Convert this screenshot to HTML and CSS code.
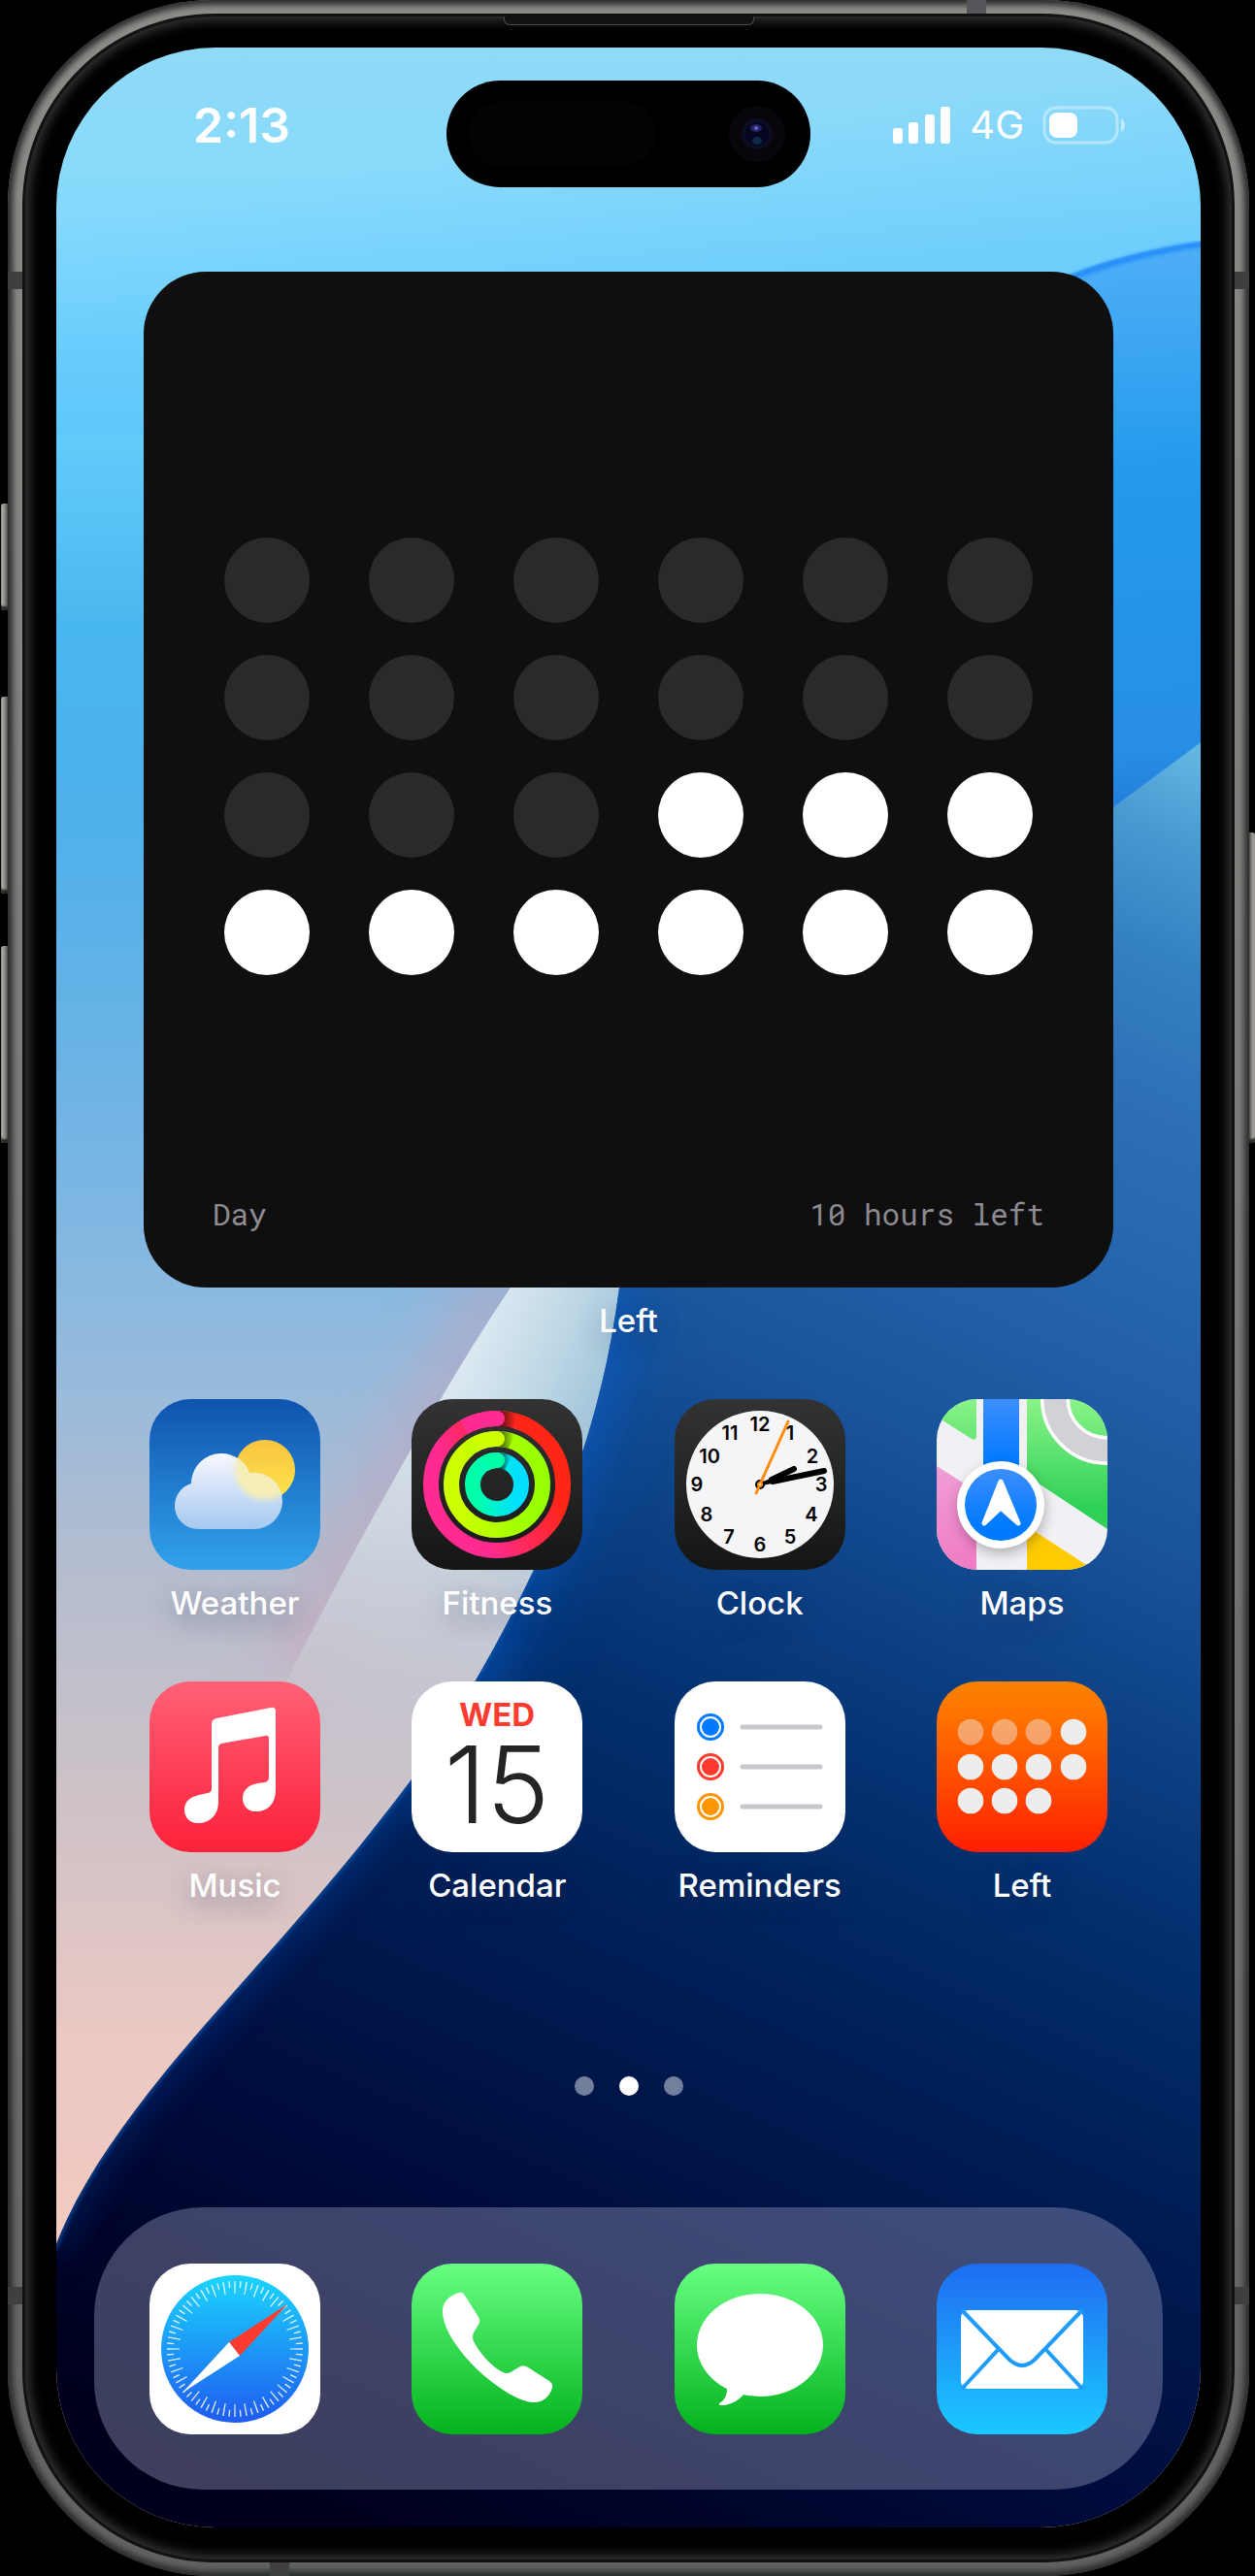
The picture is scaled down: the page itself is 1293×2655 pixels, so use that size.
FILE: index.html
```html
<!DOCTYPE html>
<html lang="en">
<head>
<meta charset="utf-8">
<meta name="viewport" content="width=device-width, initial-scale=1">
<title>Home Screen</title>
<link rel="stylesheet" href="styles.css">
</head>
<body>
<div class="stage">
<div class="phone">
  <span class="key key-action"></span>
  <span class="key key-up"></span>
  <span class="key key-down"></span>
  <span class="key key-side"></span>
  <span class="band band-left band-upper"></span>
  <span class="band band-left band-lower"></span>
  <span class="band band-right band-upper"></span>
  <span class="band band-right band-lower"></span>
  <span class="band band-top"></span>
  <span class="band band-bottom"></span>
  <div class="bezel">
    <span class="speaker"></span>
    <main class="screen">
      <svg class="wallpaper" viewBox="58 49 1179 2556" preserveAspectRatio="none" aria-hidden="true">
        <defs>
          <linearGradient id="sky" gradientUnits="userSpaceOnUse" x1="0" y1="49" x2="0" y2="2349">
            <stop offset="0" stop-color="#90daf9"/>
            <stop offset=".06" stop-color="#88dafb"/>
            <stop offset=".11" stop-color="#7dd7fe"/>
            <stop offset=".174" stop-color="#62ccfa"/>
            <stop offset=".26" stop-color="#49b7ef"/>
            <stop offset=".33" stop-color="#4bb0eb"/>
            <stop offset=".41" stop-color="#5fb2e7"/>
            <stop offset=".5" stop-color="#78b5e4"/>
            <stop offset=".56" stop-color="#8bb9df"/>
            <stop offset=".61" stop-color="#9cbbda"/>
            <stop offset=".674" stop-color="#b2bccf"/>
            <stop offset=".74" stop-color="#c3c0ca"/>
            <stop offset=".805" stop-color="#d3c3c6"/>
            <stop offset=".89" stop-color="#eac8c3"/>
            <stop offset="1" stop-color="#f4cbc0"/>
          </linearGradient>
          <linearGradient id="skyDeep" gradientUnits="userSpaceOnUse" x1="560" y1="150" x2="584" y2="330">
            <stop offset="0" stop-color="#5cc4fa" stop-opacity="0"/>
            <stop offset="1" stop-color="#5cc4fa" stop-opacity=".7"/>
          </linearGradient>
          <linearGradient id="petal" gradientUnits="userSpaceOnUse" x1="1180" y1="260" x2="1200" y2="830">
            <stop offset="0" stop-color="#4eaef7"/>
            <stop offset=".4" stop-color="#239aec"/>
            <stop offset=".9" stop-color="#278ee3"/>
            <stop offset="1" stop-color="#237fdc"/>
          </linearGradient>
          <linearGradient id="sea" gradientUnits="userSpaceOnUse" x1="1237" y1="780" x2="404" y2="2628">
            <stop offset="0" stop-color="#62b6e2"/>
            <stop offset=".04" stop-color="#4a9bd2"/>
            <stop offset=".1" stop-color="#3481c1"/>
            <stop offset=".17" stop-color="#2d70b8"/>
            <stop offset=".28" stop-color="#2362ab"/>
            <stop offset=".37" stop-color="#1a549b"/>
            <stop offset=".46" stop-color="#0d4286"/>
            <stop offset=".55" stop-color="#03306f"/>
            <stop offset=".64" stop-color="#00235c"/>
            <stop offset=".73" stop-color="#00174b"/>
            <stop offset=".82" stop-color="#000c3d"/>
            <stop offset=".92" stop-color="#000429"/>
            <stop offset="1" stop-color="#00001c"/>
          </linearGradient>
          <linearGradient id="ribbon" gradientUnits="userSpaceOnUse" x1="490" y1="1380" x2="630" y2="1440">
            <stop offset="0" stop-color="#dbe8f1"/>
            <stop offset=".5" stop-color="#bfd8e6"/>
            <stop offset="1" stop-color="#9fc3d8"/>
          </linearGradient>
          <linearGradient id="ribbonLow" gradientUnits="userSpaceOnUse" x1="520" y1="1440" x2="430" y2="1800">
            <stop offset="0" stop-color="#c8cfda" stop-opacity="0"/>
            <stop offset=".6" stop-color="#c8cdd7"/>
            <stop offset="1" stop-color="#cac5cf"/>
          </linearGradient>
          <linearGradient id="ribbonFade" gradientUnits="userSpaceOnUse" x1="0" y1="1640" x2="0" y2="1920">
            <stop offset="0" stop-color="#fff"/>
            <stop offset="1" stop-color="#000"/>
          </linearGradient>
          <mask id="fade" maskUnits="userSpaceOnUse" x="0" y="1200" width="800" height="1200">
            <rect x="0" y="1200" width="800" height="1200" fill="url(#ribbonFade)"/>
          </mask>
          <linearGradient id="rim" gradientUnits="userSpaceOnUse" x1="640" y1="1300" x2="58" y2="2313">
            <stop offset="0" stop-color="#0b63c8"/>
            <stop offset=".5" stop-color="#0346a4"/>
            <stop offset="1" stop-color="#00286e"/>
          </linearGradient>
          <filter id="soft" x="-50%" y="-50%" width="200%" height="200%"><feGaussianBlur stdDeviation="30"/></filter>
          <filter id="softer" x="-50%" y="-50%" width="200%" height="200%"><feGaussianBlur stdDeviation="16"/></filter>
          <filter id="hair" x="-5%" y="-5%" width="110%" height="110%"><feGaussianBlur stdDeviation="2"/></filter>
          <clipPath id="seaClip"><path d="M690 1000 Q655 1180 638 1327 C625 1430 595 1530 550 1618 C512 1698 470 1770 424 1834 C330 1960 240 2050 169 2137 C120 2198 80 2255 56 2318 V2610 H1240 V763 L1147 832 Q900 930 690 1000Z"/></clipPath>
        </defs>
        <rect x="58" y="49" width="1179" height="2556" fill="url(#sky)"/>
        <rect x="58" y="49" width="1179" height="400" fill="url(#skyDeep)" opacity=".7"/>
        <path d="M530 1300 L300 1730" stroke="#c9a0b8" stroke-width="60" opacity=".5" filter="url(#soft)"/>
        <g mask="url(#fade)">
          <path d="M560 1270 L526 1327 C490 1380 455 1440 424 1493 C383 1565 340 1645 297 1730 Q230 1870 200 2000 L400 2000 L700 1270Z" fill="url(#ribbon)"/>
          <path d="M560 1270 L526 1327 C490 1380 455 1440 424 1493 C383 1565 340 1645 297 1730 Q230 1870 200 2000 L400 2000 L700 1270Z" fill="url(#ribbonLow)"/>
        </g>
        <path d="M1000 340 Q1100 265 1240 249 V765 L1140 838 L1000 880Z" fill="url(#petal)"/>
        <path d="M1060 307 Q1130 268 1240 251" fill="none" stroke="#1e86fa" stroke-width="5" filter="url(#hair)"/>
        <g clip-path="url(#seaClip)">
          <rect x="50" y="700" width="1200" height="1910" fill="url(#sea)"/>
          <path d="M638 1327 C625 1430 595 1530 550 1618 C512 1698 470 1770 424 1834" fill="none" stroke="#0b5fc4" stroke-width="70" opacity=".35" filter="url(#soft)"/>
          <path d="M638 1327 C625 1430 595 1530 550 1618 C512 1698 470 1770 424 1834 C330 1960 240 2050 169 2137 C120 2198 80 2255 56 2318" fill="none" stroke="url(#rim)" stroke-width="24" opacity=".6" filter="url(#softer)"/>
          <path d="M638 1327 C625 1430 595 1530 550 1618 C512 1698 470 1770 424 1834 C330 1960 240 2050 169 2137 C120 2198 80 2255 56 2318" fill="none" stroke="#0d58b0" stroke-width="5" opacity=".7" filter="url(#hair)"/>
        </g>
      </svg>

      <header class="status">
        <time class="status-time">2:13</time>
        <div class="island">
          <span class="sensor"></span>
          <svg class="camera" viewBox="0 0 60 60" aria-hidden="true">
            <circle cx="30" cy="30" r="29" fill="#08060b"/>
            <circle cx="30" cy="30" r="16" fill="#0b0d22"/>
            <circle cx="30" cy="30" r="12" fill="#05061f"/>
            <ellipse cx="29" cy="24" rx="6" ry="4" fill="#2b2870" opacity=".8"/>
            <ellipse cx="30" cy="37" rx="5" ry="4" fill="#0d3350" opacity=".8"/>
            <circle cx="29" cy="24" r="2" fill="#6a62c8"/>
          </svg>
        </div>
        <div class="status-right">
          <svg class="signal" viewBox="0 0 60 38" aria-label="Signal" role="img">
            <g fill="#fff">
              <rect x="0" y="22" width="10" height="16" rx="3"/>
              <rect x="16" y="16" width="10" height="22" rx="3"/>
              <rect x="33" y="8" width="10" height="30" rx="3"/>
              <rect x="49" y="0" width="10" height="38" rx="3"/>
            </g>
          </svg>
          <span class="network">4G</span>
          <svg class="battery" viewBox="0 0 86 40" aria-label="Battery" role="img">
            <rect x="2" y="2" width="75" height="36" rx="12" fill="none" stroke="#fff" stroke-opacity=".4" stroke-width="3"/>
            <rect x="7" y="7" width="29" height="26" rx="8" fill="#fff"/>
            <path d="M81 13 Q85 15 85 20 Q85 25 81 27Z" fill="#fff" fill-opacity=".5"/>
          </svg>
        </div>
      </header>

      <section class="widget-slot">
        <div class="widget">
          <div class="hours">
            <i></i><i></i><i></i><i></i><i></i><i></i>
            <i></i><i></i><i></i><i></i><i></i><i></i>
            <i></i><i></i><i></i><i class="on"></i><i class="on"></i><i class="on"></i>
            <i class="on"></i><i class="on"></i><i class="on"></i><i class="on"></i><i class="on"></i><i class="on"></i>
          </div>
          <div class="widget-foot"><span>Day</span><span>10 hours left</span></div>
        </div>
        <span class="label">Left</span>
      </section>

      <nav class="apps" aria-label="Apps">
        <a class="app" href="#weather">
          <svg class="icon icon-weather" viewBox="0 0 176 176" aria-hidden="true">
            <defs>
              <linearGradient id="wSun" x1="0" y1="0" x2="0" y2="1"><stop offset="0" stop-color="#f8c43f"/><stop offset="1" stop-color="#fde54e"/></linearGradient>
              <linearGradient id="wCloud" gradientUnits="userSpaceOnUse" x1="0" y1="56" x2="0" y2="134"><stop offset="0" stop-color="#f8f8fe"/><stop offset="1" stop-color="#a4c9ef"/></linearGradient>
              <radialGradient id="wGlow" gradientUnits="userSpaceOnUse" cx="119" cy="73" r="35"><stop offset="0" stop-color="#f6eeb4"/><stop offset=".75" stop-color="#f6eeb4" stop-opacity=".95"/><stop offset="1" stop-color="#f6eeb4" stop-opacity="0"/></radialGradient>
              <clipPath id="wClip"><circle cx="50" cy="110" r="24"/><circle cx="74" cy="87" r="31"/><circle cx="108" cy="105" r="29"/><rect x="50" y="84" width="58" height="50"/></clipPath>
            </defs>
            <circle cx="119" cy="73" r="31" fill="url(#wSun)"/>
            <g clip-path="url(#wClip)">
              <rect x="20" y="50" width="125" height="90" fill="url(#wCloud)"/>
              <circle cx="119" cy="73" r="35" fill="url(#wGlow)"/>
            </g>
          </svg>
          <span class="label">Weather</span>
        </a>
        <a class="app" href="#fitness">
          <svg class="icon icon-dark" viewBox="0 0 176 176" aria-hidden="true">
            <defs>
              <linearGradient id="f1" gradientUnits="userSpaceOnUse" x1="60" y1="120" x2="140" y2="80"><stop offset="0" stop-color="#ff2b90"/><stop offset="1" stop-color="#ff2617"/></linearGradient>
              <linearGradient id="f2" gradientUnits="userSpaceOnUse" x1="50" y1="88" x2="130" y2="88"><stop offset="0" stop-color="#ccff00"/><stop offset="1" stop-color="#96ff00"/></linearGradient>
              <linearGradient id="f3" gradientUnits="userSpaceOnUse" x1="68" y1="88" x2="108" y2="88"><stop offset="0" stop-color="#00ffa9"/><stop offset="1" stop-color="#00dfff"/></linearGradient>
              <linearGradient id="fs" x1="0" y1="0" x2="1" y2="0"><stop offset="0" stop-color="#000" stop-opacity=".7"/><stop offset="1" stop-color="#000" stop-opacity="0"/></linearGradient>
            </defs>
            <g fill="none" stroke-width="16">
              <circle cx="88" cy="88" r="68" stroke="url(#f1)"/>
              <circle cx="88" cy="88" r="47" stroke="url(#f2)"/>
              <circle cx="88" cy="88" r="25" stroke="url(#f3)"/>
            </g>
            <path d="M90 12 Q100 13 108 15 L104 31 Q98 29 90 28Z" fill="url(#fs)"/>
            <path d="M90 33 Q100 34 106 37 L100 51 Q96 49 90 49Z" fill="url(#fs)"/>
            <path d="M90 55 Q98 56 103 59 L96 73 Q94 72 90 71Z" fill="url(#fs)"/>
            <path d="M88 12 A8 8 0 0 1 88 28 A60 60 0 0 0 58 36 L50 22 A76 76 0 0 1 88 12Z" fill="#ff2b90"/>
            <path d="M88 33 A8 8 0 0 1 88 49 A39 39 0 0 0 68 54 L60 41 A55 55 0 0 1 88 33Z" fill="#ccff00"/>
            <path d="M88 55 A8 8 0 0 1 88 71 A17 17 0 0 0 79 74 L71 60 A33 33 0 0 1 88 55Z" fill="#00ffa9"/>
          </svg>
          <span class="label">Fitness</span>
        </a>
        <a class="app" href="#clock">
          <svg class="icon icon-dark" viewBox="0 0 176 176" aria-hidden="true">
            <circle cx="88" cy="88" r="76" fill="#f5f5f8"/>
            <g class="numerals">
              <text x="88" y="33">12</text><text x="119" y="42">1</text><text x="142" y="66">2</text>
              <text x="151" y="95">3</text><text x="141" y="126">4</text><text x="119" y="149">5</text>
              <text x="88" y="157">6</text><text x="56" y="149">7</text><text x="33" y="126">8</text>
              <text x="23" y="95">9</text><text x="36" y="66">10</text><text x="57" y="42">11</text>
            </g>
            <g stroke="#000" stroke-linecap="round">
              <path d="M88 88 L100 83" stroke-width="3"/>
              <path d="M100 83 L123 72" stroke-width="6"/>
              <path d="M88 88 L102 85" stroke-width="3"/>
              <path d="M101 85 L154 74" stroke-width="6"/>
            </g>
            <circle cx="88" cy="88" r="5" fill="#000"/>
            <path d="M84 97 L117 23" stroke="#ff8c0c" stroke-width="3" stroke-linecap="round"/>
            <circle cx="88" cy="88" r="2" fill="#fff" stroke="#ff8c0c" stroke-width="2"/>
          </svg>
          <span class="label">Clock</span>
        </a>
        <a class="app" href="#maps">
          <svg class="icon icon-maps" viewBox="0 0 176 176" aria-hidden="true">
            <defs>
              <linearGradient id="mGreen" gradientUnits="userSpaceOnUse" x1="0" y1="0" x2="0" y2="110"><stop offset="0" stop-color="#8af388"/><stop offset="1" stop-color="#30d158"/></linearGradient>
              <linearGradient id="mBlue" gradientUnits="userSpaceOnUse" x1="0" y1="0" x2="0" y2="66"><stop offset="0" stop-color="#3d8efb"/><stop offset="1" stop-color="#007aff"/></linearGradient>
              <linearGradient id="mPin" x1="0" y1="0" x2="0" y2="1"><stop offset="0" stop-color="#3d8efb"/><stop offset=".8" stop-color="#007aff"/></linearGradient>
              <linearGradient id="mPink" x1="0" y1="0" x2="0" y2="1"><stop offset="0" stop-color="#f09ed6"/><stop offset="1" stop-color="#f07bc4"/></linearGradient>
              <filter id="mShadow" x="-30%" y="-30%" width="160%" height="160%"><feGaussianBlur stdDeviation="7"/></filter>
            </defs>
            <path d="M0 0 H41 V38 Q41 43 36 41 L0 18Z" fill="url(#mGreen)"/>
            <rect x="48" y="0" width="37" height="100" fill="url(#mBlue)"/>
            <path d="M93 0 H176 V134 L93 79Z" fill="url(#mGreen)"/>
            <path d="M0 69 L41 95 V176 H0Z" fill="url(#mPink)"/>
            <path d="M93 131 L162 176 H93Z" fill="#fecb02"/>
            <circle cx="175" cy="0" r="53" fill="none" stroke="#fff" stroke-width="30"/>
            <circle cx="175" cy="0" r="53" fill="none" stroke="#d1d1d6" stroke-width="23"/>
            <circle cx="67" cy="114" r="44" fill="#000" opacity=".3" filter="url(#mShadow)"/>
            <circle cx="66" cy="109" r="45" fill="#fff"/>
            <circle cx="66" cy="109" r="37" fill="url(#mPin)"/>
            <path d="M66 85 L84 128 L66 112 L49 128Z" fill="#fff" stroke="#fff" stroke-width="5" stroke-linejoin="round"/>
          </svg>
          <span class="label">Maps</span>
        </a>
        <a class="app" href="#music">
          <svg class="icon icon-music" viewBox="0 0 176 176" aria-hidden="true">
            <path d="M69 38 L125 27 Q130 26 130 31 V112 C130 126 122 134 110 134 C101 134 96 128 96 120 C96 112 102 107 111 105 L119 104 Q123 103 123 99 V59 Q123 55 119 56 L74 64 Q71 65 71 68 V124 C71 138 62 146 50 146 C41 146 36 140 36 132 C36 124 42 119 51 117 L60 115 Q64 114 64 111 V44 Q64 39 69 38Z" fill="#fff"/>
          </svg>
          <span class="label">Music</span>
        </a>
        <a class="app" href="#calendar">
          <svg class="icon icon-white" viewBox="0 0 176 176" aria-hidden="true">
            <text class="weekday" x="88" y="46">WED</text>
            <text class="day" x="88" y="146">15</text>
          </svg>
          <span class="label">Calendar</span>
        </a>
        <a class="app" href="#reminders">
          <svg class="icon icon-white" viewBox="0 0 176 176" aria-hidden="true">
            <g fill="none" stroke-width="3">
              <circle cx="37" cy="47" r="12.5" stroke="#007aff"/>
              <circle cx="37" cy="88" r="12.5" stroke="#ff3b30"/>
              <circle cx="37" cy="129" r="12.5" stroke="#ff9500"/>
            </g>
            <circle cx="37" cy="47" r="9" fill="#007aff"/>
            <circle cx="37" cy="88" r="9" fill="#ff3b30"/>
            <circle cx="37" cy="129" r="9" fill="#ff9500"/>
            <path d="M70 47 H150 M70 88 H150 M70 129 H150" stroke="#c7c7cc" stroke-width="5" stroke-linecap="round"/>
          </svg>
          <span class="label">Reminders</span>
        </a>
        <a class="app" href="#left">
          <svg class="icon icon-left" viewBox="0 0 176 176" aria-hidden="true">
            <g fill="#ededed">
              <g fill-opacity=".45"><circle cx="35" cy="52" r="13.3"/><circle cx="70" cy="52" r="13.3"/><circle cx="105" cy="52" r="13.3"/></g>
              <circle cx="141" cy="52" r="13.3"/>
              <circle cx="35" cy="88" r="13.3"/><circle cx="70" cy="88" r="13.3"/><circle cx="105" cy="88" r="13.3"/><circle cx="141" cy="88" r="13.3"/>
              <circle cx="35" cy="123" r="13.3"/><circle cx="70" cy="123" r="13.3"/><circle cx="105" cy="123" r="13.3"/>
            </g>
          </svg>
          <span class="label">Left</span>
        </a>
      </nav>

      <div class="pages">
        <button type="button" aria-label="Page 1"></button>
        <button type="button" class="current" aria-label="Page 2"></button>
        <button type="button" aria-label="Page 3"></button>
      </div>

      <nav class="dock" aria-label="Dock">
        <a class="app" href="#safari" aria-label="Safari">
          <svg class="icon icon-white" viewBox="0 0 176 176" aria-hidden="true">
            <defs><linearGradient id="sBlue" x1="0" y1="0" x2="0" y2="1"><stop offset="0" stop-color="#1bd5fd"/><stop offset="1" stop-color="#1f5bf0"/></linearGradient></defs>
            <circle cx="88" cy="88" r="76" fill="url(#sBlue)"/>
            <g fill="none" stroke="#fff" stroke-opacity=".85">
              <circle cx="88" cy="88" r="63.5" stroke-width="13" pathLength="360" stroke-dasharray="1.2 8.8" stroke-dashoffset=".6"/>
              <circle cx="88" cy="88" r="66.5" stroke-width="7" pathLength="360" stroke-dasharray="1.2 8.8" stroke-dashoffset="-4.4"/>
            </g>
            <path d="M142 42 L82 81 L93 95Z" fill="#ff3b30"/>
            <path d="M34 133 L82 81 L93 95Z" fill="#fff"/>
          </svg>
        </a>
        <a class="app" href="#phone" aria-label="Phone">
          <svg class="icon icon-green" viewBox="0 0 176 176" aria-hidden="true">
            <path d="M52 30 Q54 31 55 33 L69 55 Q71 59 69 63 L64 71 Q62 76 64 80 C70 92 82 106 94 112 Q98 114 102 112 L112 106 Q116 104 120 107 L142 121 Q146 124 145 128 C142 138 134 144 125 143 C95 141 33 85 32 50 C31 40 40 32 49 30 Q51 29 52 30Z" fill="#fff"/>
          </svg>
        </a>
        <a class="app" href="#messages" aria-label="Messages">
          <svg class="icon icon-green" viewBox="0 0 176 176" aria-hidden="true">
            <ellipse cx="88" cy="84" rx="65" ry="53" fill="#fff"/>
            <path d="M53 122 C56 134 52 141 46 144 Q45 146 48 146 C58 146 67 140 72 134 L80 120Z" fill="#fff"/>
          </svg>
        </a>
        <a class="app" href="#mail" aria-label="Mail">
          <svg class="icon icon-mail" viewBox="0 0 176 176" aria-hidden="true">
            <rect x="25" y="48" width="126" height="81" rx="8" fill="#fff"/>
            <g fill="none" stroke="#1f9cf9" stroke-width="4">
              <path d="M26 48 L75 99 Q88 111 101 99 L150 48"/>
              <path d="M26 129 L64 88 M150 129 L112 88"/>
            </g>
          </svg>
        </a>
      </nav>
    </main>
  </div>
</div>
</div>
</body>
</html>
```
FILE: styles.css
```css
* { box-sizing: border-box; }

body {
  margin: 0;
  background: #000;
  font-family: Inter, "Liberation Sans", sans-serif;
  color: #fff;
}

.stage { padding: 0 6px 0 8px; }

/* Device body */
.phone {
  position: relative;
  padding: 15px 16px;
  border-radius: 212px;
  background: linear-gradient(#8d8c89, #7d7d7b 40%, #616263);
  box-shadow: inset 0 0 6px 5px #292b2c;
}

.key {
  position: absolute;
  left: -7px;
  width: 7px;
  border-radius: 3px 0 0 3px;
  background: linear-gradient(90deg, #c4c1bb, #5a5957);
  box-shadow: inset 0 -4px 2px #2b2b2b;
}
.key-action { top: 519px; height: 110px; }
.key-up { top: 718px; height: 203px; }
.key-down { top: 975px; height: 203px; }
.key-side {
  left: auto;
  right: -6px;
  top: 858px;
  width: 6px;
  height: 320px;
  border-radius: 0 3px 3px 0;
  background: linear-gradient(270deg, #c4c1bb, #5a5957);
}

.band { position: absolute; background: #3e3f40; }
.band-left { left: 0; }
.band-right { right: 0; }
.band-left, .band-right { width: 16px; height: 18px; }
.band-upper { top: 280px; }
.band-lower { bottom: 280px; }
.band-top, .band-bottom { width: 20px; height: 15px; }
.band-top { top: 0; right: 271px; background: #55565a; }
.band-bottom { bottom: 0; left: 270px; }

.bezel {
  position: relative;
  padding: 34px 34px 35px;
  border-radius: 197px;
  background: #000;
  box-shadow: 0 0 0 1px #101112, inset 0 0 0 2px #101112, inset 0 0 12px 6px #363737;
}

.speaker {
  position: absolute;
  top: 2px;
  left: 50%;
  width: 258px;
  height: 9px;
  margin-left: -129px;
  border: 1px solid #4a4b4c;
  border-top: 0;
  border-radius: 0 0 6px 6px;
  background: #121212;
}

.screen {
  position: relative;
  isolation: isolate;
  display: flex;
  flex-direction: column;
  overflow: hidden;
  padding: 34px 39px 39px;
  border-radius: 164px;
}

.wallpaper {
  position: absolute;
  z-index: -1;
  inset: 0;
  width: 100%;
  height: 100%;
}

/* Status bar */
.status {
  display: grid;
  grid-template-columns: 1fr 375px 1fr;
  align-items: start;
}
.status-time {
  padding-left: 102px;
  font-size: 50px;
  font-weight: 600;
  line-height: 92px;
}
.island {
  display: flex;
  align-items: center;
  justify-content: space-between;
  height: 110px;
  padding: 0 25px 0 22px;
  border-radius: 55px;
  background: #000;
}
.sensor { width: 194px; height: 66px; border-radius: 33px; background: #030303; }
.camera { width: 60px; height: 60px; }
.status-right {
  display: flex;
  align-items: center;
  justify-content: flex-end;
  gap: 19px;
  height: 92px;
  padding-right: 38px;
}
.signal { width: 60px; height: 38px; }
.network { font-size: 40px; font-weight: 400; line-height: 48px; }
.battery { width: 86px; height: 40px; }

/* Widget */
.widget-slot {
  display: flex;
  flex-direction: column;
  gap: 14px;
  padding: 87px 51px 0;
}
.widget {
  display: flex;
  flex-direction: column;
  justify-content: space-between;
  padding: 274px 71px 56px;
  height: 1047px;
  border-radius: 64px;
  background: #0f0f0f;
}
.hours {
  display: grid;
  grid-template-columns: repeat(6, 88px);
  justify-content: space-between;
  row-gap: 33px;
  padding: 0 12px;
}
.hours i { height: 88px; border-radius: 50%; background: #2a2a2a; }
.hours .on { background: #fff; }
.widget-foot {
  display: flex;
  justify-content: space-between;
  font: 31px/40px "SF Mono", "Roboto Mono", "Noto Sans Mono", "Liberation Mono", monospace;
  color: #8d8b90;
}

.label {
  font-size: 33px;
  font-weight: 500;
  line-height: 40px;
  text-align: center;
  white-space: nowrap;
  text-shadow: 0 8px 26px rgba(50, 60, 100, .45);
}

/* Apps */
.apps {
  display: grid;
  grid-template-columns: repeat(4, 176px);
  justify-content: space-between;
  row-gap: 61px;
  padding: 61px 57px 0;
}
.app {
  display: flex;
  flex-direction: column;
  align-items: center;
  gap: 14px;
  color: inherit;
  text-decoration: none;
}
.icon { display: block; width: 176px; height: 176px; border-radius: 42px; }
.icon-weather { background: linear-gradient(#0f53af, #32a2ec); }
.icon-dark { background: linear-gradient(#333, #151515); }
.icon-maps { background: #f0f0f5; }
.icon-music { background: linear-gradient(#ff6076, #fc213a); }
.icon-white { background: #fff; }
.icon-left { background: linear-gradient(#f88300, #ff7300 20%, #ff4a00 60%, #ff1e00); }
.icon-green { background: linear-gradient(#68ff82, #02b21d); }
.icon-mail { background: linear-gradient(#1f6cf2, #1bc9ff); }

.numerals { font-size: 20px; font-weight: 600; text-anchor: middle; }
.weekday { font-size: 33px; font-weight: 700; text-anchor: middle; fill: #ff3b30; }
.day { font-size: 110px; font-weight: 300; text-anchor: middle; fill: #242424; }

.pages {
  display: flex;
  justify-content: center;
  gap: 26px;
  padding: 177px 0 115px;
}
.pages button {
  width: 20px;
  height: 20px;
  padding: 0;
  border: 0;
  border-radius: 50%;
  background: rgba(255, 255, 255, .45);
}
.pages .current { background: #fff; }

.dock {
  display: flex;
  justify-content: space-between;
  padding: 58px 57px 57px;
  border-radius: 112px;
  background: rgba(149, 152, 186, .41);
}
```
